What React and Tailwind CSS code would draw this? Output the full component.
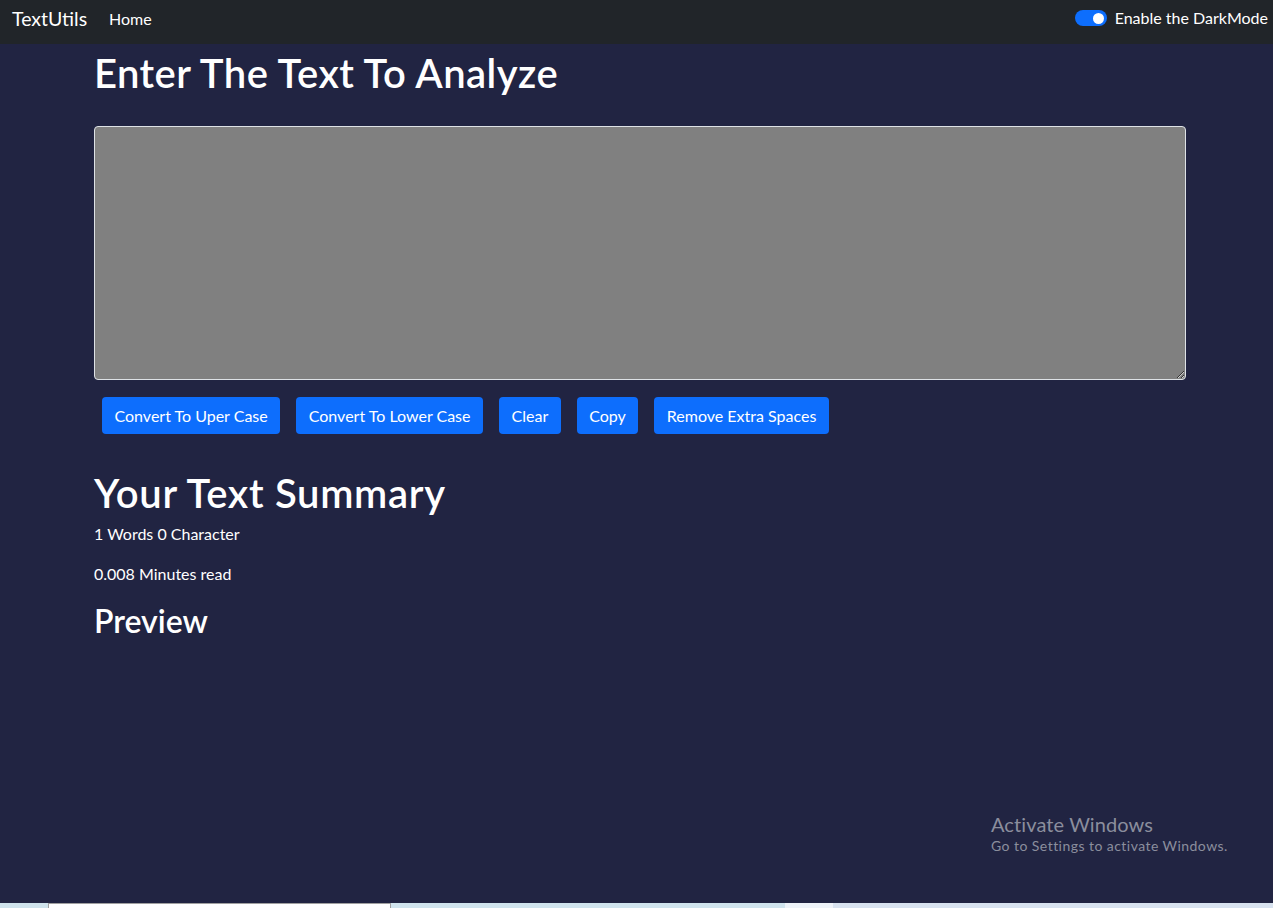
import React, { useState } from "react";

const font = { fontFamily: '"Lato", "Noto Sans", sans-serif' };

function Navbar({ dark, onToggle }) {
  return (
    <nav className="h-[44px] bg-[#212529] flex items-center justify-between pl-[12px] pr-[5px] pb-[6px]">
      <div className="flex items-center">
        <a className="text-[19.5px] text-white mr-[14px] leading-[30px]" href="#">
          TextUtils
        </a>
        <a className="text-[16px] text-white px-[8px] leading-[24px]" href="#">
          Home
        </a>
      </div>
      <label className="flex items-center cursor-pointer -mt-[2px]">
        <button
          onClick={onToggle}
          className={`w-[32px] h-[16px] rounded-full flex items-center px-[3px] ${
            dark ? "bg-[#0d6efd] justify-end" : "bg-white border border-gray-400 justify-start"
          }`}
        >
          <span className={`w-[11px] h-[11px] rounded-full ${dark ? "bg-white" : "bg-gray-400"}`}></span>
        </button>
        <span className="ml-[8px] text-[16px] text-white leading-[24px]">Enable the DarkMode</span>
      </label>
    </nav>
  );
}

export default function App() {
  const [dark, setDark] = useState(true);
  const [text, setText] = useState("");

  const words = text.split(" ").length;
  const buttons = [
    "Convert To Uper Case",
    "Convert To Lower Case",
    "Clear",
    "Copy",
    "Remove Extra Spaces",
  ];

  return (
    <div className="min-h-[908px] flex flex-col bg-[#212442] relative" style={font}>
      <Navbar dark={dark} onToggle={() => setDark((d) => !d)} />

      <main className="flex-1 pl-[94px] w-[1186px] text-white">
        <h1 className="mt-[5px] text-[40px] leading-[48px] font-semibold tracking-[0.45px]">
          Enter The Text To Analyze
        </h1>
        <textarea
          value={text}
          onChange={(e) => setText(e.target.value)}
          className="mt-[29px] block w-[1092px] h-[254px] bg-[#808080] border border-[#dee2e6] rounded-[4px] p-[6px_12px] text-white outline-none"
        ></textarea>

        <div className="mt-[17px] flex">
          {buttons.map((b) => (
            <button
              key={b}
              className="mx-[8px] h-[37px] px-[12.5px] rounded-[4px] bg-[#0d6efd] text-white text-[16px]"
            >
              {b}
            </button>
          ))}
        </div>

        <h1 className="mt-[35px] text-[40px] leading-[48px] font-semibold tracking-[0.7px]">Your Text Summary</h1>
        <p className="mt-[5px] text-[16px] leading-[24px]">
          {words} Words {text.length} Character
        </p>
        <p className="mt-[16px] text-[16px] leading-[24px]">{(0.008 * words).toFixed(3)} Minutes read</p>
        <h2 className="mt-[16px] text-[32px] leading-[38px] font-semibold">Preview</h2>
        <p className="text-[16px] leading-[24px]">{text}</p>
      </main>

      {/* windows watermark */}
      <div className="absolute left-[991px] top-[811px] text-[#8b8e9d]">
        <div className="text-[20px] leading-[26px] tracking-[0.1px]">Activate Windows</div>
        <div className="text-[14px] leading-[18px] tracking-[0.45px]">Go to Settings to activate Windows.</div>
      </div>

      {/* taskbar strip */}
      <div className="h-[5px] flex">
        <div className="w-[48px] bg-[#cfe3ec]"></div>
        <div className="w-[343px] bg-white border-t border-x border-[#a0a0a0]"></div>
        <div className="w-[394px] bg-[#d0e4ee]"></div>
        <div className="w-[48px] bg-[#eef3f9]"></div>
        <div className="flex-1 bg-[#d8e2ef]"></div>
      </div>
    </div>
  );
}
